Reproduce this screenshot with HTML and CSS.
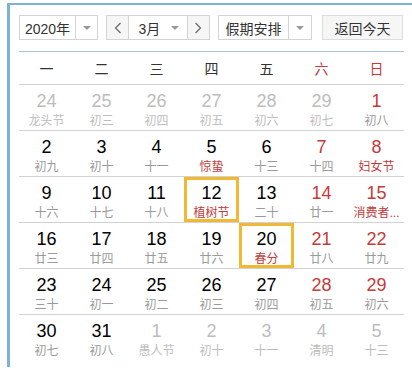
FILE: index.html
```html
<!DOCTYPE html>
<html lang="zh">
<head>
<meta charset="utf-8">
<link rel="stylesheet" href="styles.css">
</head>
<body>
<div class="calendar">
  <div class="toolbar">
    <div class="select year">
      <span class="sel-text">2020年</span>
      <span class="sel-arrow"><i class="tri"></i></span>
    </div>
    <div class="month-group">
      <button class="nav-btn"><svg width="8" height="12" viewBox="0 0 8 12"><path d="M6.5 1 L1.5 6 L6.5 11" fill="none" stroke="#666" stroke-width="1.2"/></svg></button>
      <div class="month-sel"><span class="sel-text">3月</span><i class="tri"></i></div>
      <button class="nav-btn"><svg width="8" height="12" viewBox="0 0 8 12"><path d="M1.5 1 L6.5 6 L1.5 11" fill="none" stroke="#666" stroke-width="1.2"/></svg></button>
    </div>
    <div class="select holiday">
      <span class="sel-text">假期安排</span>
      <span class="sel-arrow"><i class="tri"></i></span>
    </div>
    <button class="today">返回今天</button>
  </div>
  <div class="weekdays">
    <span>一</span><span>二</span><span>三</span><span>四</span><span>五</span><span class="red">六</span><span class="red">日</span>
  </div>
  <div class="grid">
    <div class="cell other"><b>24</b><em>龙头节</em></div>
    <div class="cell other"><b>25</b><em>初三</em></div>
    <div class="cell other"><b>26</b><em>初四</em></div>
    <div class="cell other"><b>27</b><em>初五</em></div>
    <div class="cell other"><b>28</b><em>初六</em></div>
    <div class="cell other"><b>29</b><em>初七</em></div>
    <div class="cell weekend"><b>1</b><em>初八</em></div>

    <div class="cell"><b>2</b><em>初九</em></div>
    <div class="cell"><b>3</b><em>初十</em></div>
    <div class="cell"><b>4</b><em>十一</em></div>
    <div class="cell"><b>5</b><em class="fest">惊蛰</em></div>
    <div class="cell"><b>6</b><em>十三</em></div>
    <div class="cell weekend"><b>7</b><em>十四</em></div>
    <div class="cell weekend"><b>8</b><em class="fest">妇女节</em></div>

    <div class="cell"><b>9</b><em>十六</em></div>
    <div class="cell"><b>10</b><em>十七</em></div>
    <div class="cell"><b>11</b><em>十八</em></div>
    <div class="cell mark"><b>12</b><em class="fest">植树节</em></div>
    <div class="cell"><b>13</b><em>二十</em></div>
    <div class="cell weekend"><b>14</b><em>廿一</em></div>
    <div class="cell weekend"><b>15</b><em class="fest">消费者...</em></div>

    <div class="cell"><b>16</b><em>廿三</em></div>
    <div class="cell"><b>17</b><em>廿四</em></div>
    <div class="cell"><b>18</b><em>廿五</em></div>
    <div class="cell"><b>19</b><em>廿六</em></div>
    <div class="cell mark"><b>20</b><em class="fest">春分</em></div>
    <div class="cell weekend"><b>21</b><em>廿八</em></div>
    <div class="cell weekend"><b>22</b><em>廿九</em></div>

    <div class="cell"><b>23</b><em>三十</em></div>
    <div class="cell"><b>24</b><em>初一</em></div>
    <div class="cell"><b>25</b><em>初二</em></div>
    <div class="cell"><b>26</b><em>初三</em></div>
    <div class="cell"><b>27</b><em>初四</em></div>
    <div class="cell weekend"><b>28</b><em>初五</em></div>
    <div class="cell weekend"><b>29</b><em>初六</em></div>

    <div class="cell last"><b>30</b><em>初七</em></div>
    <div class="cell last"><b>31</b><em>初八</em></div>
    <div class="cell last other"><b>1</b><em>愚人节</em></div>
    <div class="cell last other"><b>2</b><em>初十</em></div>
    <div class="cell last other"><b>3</b><em>十一</em></div>
    <div class="cell last other"><b>4</b><em>清明</em></div>
    <div class="cell last other"><b>5</b><em>十三</em></div>
  </div>
</div>
</body>
</html>
```
FILE: styles.css
```css
* { box-sizing: border-box; }
html, body { margin: 0; padding: 0; background: #fff; }
body {
  font-family: "Liberation Sans", "Noto Sans CJK SC", sans-serif;
  color: #000;
  width: 412px;
  height: 368px;
  overflow: hidden;
}
.calendar {
  margin: 3px 0 0 7px;
  border-top: 2px solid #7fb1d2;
  border-left: 3px solid #7fb1d2;
  padding: 10px 8px 6px 9px;
}
.toolbar {
  display: flex;
  height: 25px;
  align-items: stretch;
}
.select {
  display: flex;
  border: 1px solid #d4d4d4;
  background: #fff;
  font-size: 14px;
  color: #333;
}
.select .sel-text {
  display: flex;
  align-items: center;
  justify-content: center;
  border-right: 1px solid #d4d4d4;
}
.sel-arrow {
  display: flex;
  align-items: center;
  justify-content: center;
  flex: 1;
}
.tri {
  display: block;
  width: 0;
  height: 0;
  border-left: 4px solid transparent;
  border-right: 4px solid transparent;
  border-top: 4px solid #999;
}
.year { width: 79px; }
.year .sel-text { width: 56px; }
.month-group {
  display: flex;
  margin-left: 8px;
  border: 1px solid #d4d4d4;
  width: 104px;
}
.nav-btn {
  width: 22px;
  border: 0;
  padding: 0;
  margin: 0;
  background: #f6f6f6;
  display: flex;
  align-items: center;
  justify-content: center;
}
.month-sel {
  width: 60px;
  border-left: 1px solid #d4d4d4;
  border-right: 1px solid #d4d4d4;
  display: flex;
  align-items: center;
  padding: 0 8px 0 9px;
  justify-content: space-between;
  font-size: 14px;
  color: #333;
  background: #fff;
}
.holiday { width: 94px; margin-left: 8px; }
.holiday .sel-text { width: 70px; }
.today {
  margin-left: 10px;
  width: 81px;
  border: 1px solid #dcdcdc;
  background: #f6f6f6;
  font-family: "Liberation Sans", "Noto Sans CJK SC", sans-serif;
  font-size: 14px;
  color: #333;
  padding: 0;
}
.weekdays {
  margin-top: 11px;
  border-top: 1px solid #a9c3d3;
  border-bottom: 1px solid #d2d2d2;
  display: grid;
  grid-template-columns: repeat(7, 55px);
  height: 34px;
  align-items: center;
  font-size: 14px;
  color: #333;
}
.weekdays span { text-align: center; }
.red { color: #c63a3a; }
.grid {
  display: grid;
  grid-template-columns: repeat(7, 55px);
  grid-auto-rows: 46px;
}
.cell {
  border-bottom: 1px solid #d2d2d2;
  display: flex;
  flex-direction: column;
  align-items: center;
  justify-content: center;
  padding-top: 4px;
}
.cell.last { border-bottom: 0; padding-bottom: 1px; }
.cell b {
  font-weight: normal;
  font-size: 18px;
  line-height: 20px;
  color: #000;
}
.cell em {
  font-style: normal;
  font-size: 12px;
  line-height: 16px;
  margin-top: 2px;
  color: #9a9a9a;
}
.cell.weekend b { color: #c63a3a; }
.cell em.fest { color: #c63a3a; }
.cell.other b, .cell.other em { color: #bdbdbd; }
.cell.mark { box-shadow: inset 0 0 0 3px #f1b834; }
```
